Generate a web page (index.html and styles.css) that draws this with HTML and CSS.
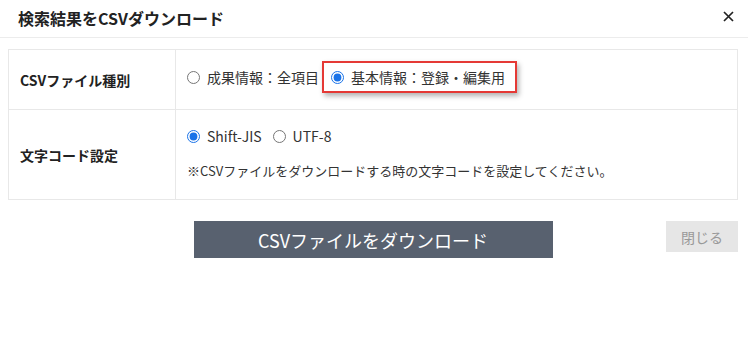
FILE: index.html
```html
<!DOCTYPE html>
<html lang="ja">

<head>
    <meta charset="UTF-8">
    <meta name="viewport" content="width=device-width, initial-scale=1.0">
    <title>検索結果をCSVダウンロード</title>
    <link rel="stylesheet" href="styles.css">
</head>

<body>
    <div class="modal">
        <div class="modal-header">
            <h1>検索結果をCSVダウンロード</h1>
            <button class="close-x" aria-label="閉じる">
                <svg width="11" height="11" viewBox="0 0 11 11">
                    <path d="M1 1 L10 10 M10 1 L1 10" stroke="#222" stroke-width="1.7" fill="none" />
                </svg>
            </button>
        </div>

        <div class="modal-body">
            <div class="form-table">
                <div class="form-row row-type">
                    <div class="label">CSVファイル種別</div>
                    <div class="value">
                        <label class="option">
                            <input type="radio" name="type">
                            <span>成果情報：全項目</span>
                        </label>
                        <label class="option highlight">
                            <input type="radio" name="type" checked>
                            <span>基本情報：登録・編集用</span>
                        </label>
                    </div>
                </div>
                <div class="form-row row-code">
                    <div class="label">文字コード設定</div>
                    <div class="value">
                        <div class="options">
                            <label class="option">
                                <input type="radio" name="code" checked>
                                <span>Shift-JIS</span>
                            </label>
                            <label class="option">
                                <input type="radio" name="code">
                                <span>UTF-8</span>
                            </label>
                        </div>
                        <p class="note">※CSVファイルをダウンロードする時の文字コードを設定してください。</p>
                    </div>
                </div>
            </div>

            <div class="actions">
                <button class="btn-download">CSVファイルをダウンロード</button>
                <button class="btn-close">閉じる</button>
            </div>
        </div>
    </div>
</body>

</html>
```

FILE: styles.css
```css
body,
html {
    margin: 0;
    padding: 0;
    background: #fff;
    color: #333;
    font-family: "Noto Sans CJK JP", "Noto Sans", sans-serif;
}

.modal {
    width: 748px;
}

.modal-header {
    display: flex;
    align-items: center;
    justify-content: space-between;
    height: 38px;
    padding: 0 14px 0 18px;
    border-bottom: 1px solid #ececec;
    box-sizing: border-box;
}

.modal-header h1 {
    margin: 0;
    font-size: 16px;
    font-weight: bold;
    color: #222;
    line-height: 1;
    padding-bottom: 2px;
}

.close-x {
    border: none;
    background: none;
    padding: 0;
    width: 11px;
    height: 11px;
    margin-bottom: 5px;
    cursor: pointer;
}

.close-x svg {
    display: block;
}

.modal-body {
    padding: 11px 10px 0 8px;
}

.form-table {
    border: 1px solid #e8e8e8;
}

.form-row {
    display: grid;
    grid-template-columns: 166px 1fr;
}

.form-row + .form-row {
    border-top: 1px solid #e8e8e8;
}

.form-row .label {
    display: flex;
    align-items: center;
    padding-left: 11px;
    font-size: 14px;
    font-weight: bold;
    color: #222;
}

.form-row .value {
    border-left: 1px solid #e8e8e8;
    padding-left: 11px;
    font-size: 14px;
}

.row-type {
    height: 59px;
}

.row-type .value {
    display: flex;
    align-items: flex-start;
    padding-top: 11px;
}

.row-type .option {
    height: 32px;
}

.option {
    display: flex;
    align-items: center;
    gap: 7px;
    line-height: 20px;
    cursor: pointer;
}

.option input {
    margin: 0;
    width: 13px;
    height: 13px;
    accent-color: #1a73e8;
}

.option.highlight {
    margin-left: 3px;
    padding: 0 10px 0 7px;
    border: 2px solid #e53935;
    box-sizing: border-box;
    box-shadow: 2px 3px 5px rgba(0, 0, 0, 0.3);
}

.row-code {
    height: 89px;
}

.row-code .value {
    padding-top: 16px;
}

.options {
    display: flex;
    gap: 11px;
}

.note {
    margin: 15px 0 0 0;
    font-size: 13px;
    line-height: 20px;
}

.actions {
    display: grid;
    grid-template-columns: 1fr auto 1fr;
    align-items: start;
    margin-top: 21px;
}

.btn-download {
    grid-column: 2;
    width: 359px;
    height: 37px;
    border: none;
    background: #58616f;
    color: #fff;
    font-family: inherit;
    font-size: 18px;
    cursor: pointer;
}

.btn-close {
    grid-column: 3;
    justify-self: end;
    width: 72px;
    height: 31px;
    border: none;
    background: #e6e6e6;
    color: #999;
    font-family: inherit;
    font-size: 14px;
    cursor: pointer;
}
```
